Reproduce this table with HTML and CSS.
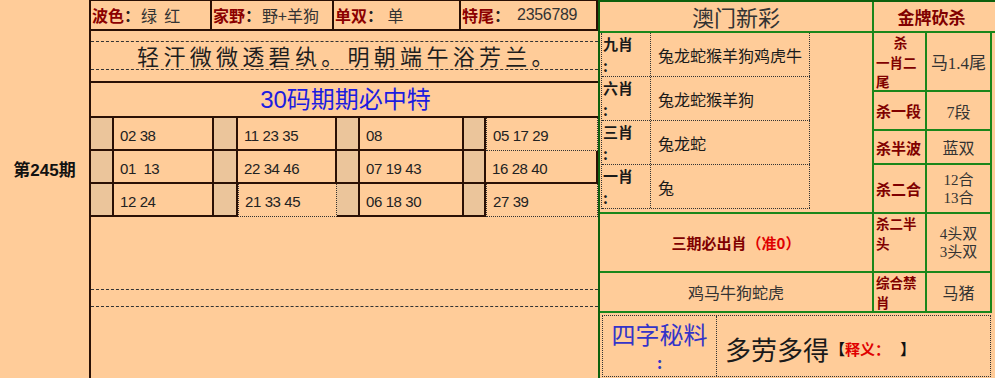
FILE: index.html
```html
<!DOCTYPE html>
<html lang="zh-CN">
<head>
<meta charset="utf-8">
<title>第245期</title>
<link rel="stylesheet" href="styles.css">
</head>
<body>
<div class="page">
  <div class="period">第245期</div>

  <div class="mid">
    <div class="info-row">
      <div class="info w1"><span class="lbl">波色</span><span class="colon">：</span>绿&nbsp; 红</div>
      <div class="info w2"><span class="lbl">家野</span><span class="colon">：</span>野+羊狗</div>
      <div class="info w3"><span class="lbl">单双</span><span class="colon">：</span>&nbsp;单</div>
      <div class="info w4"><span class="lbl">特尾</span><span class="colon">：</span><span class="digits">2356789</span></div>
    </div>
    <div class="poem-wrap">
      <div class="poem">轻汗微微透碧纨。明朝端午浴芳兰。</div>
    </div>
    <div class="title30">30码期期必中特</div>
    <div class="grid30">
      <div class="sh"></div><div class="nm">02 38</div><div class="sh"></div><div class="nm">11 23 35</div><div class="sh"></div><div class="nm">08</div><div class="sh"></div><div class="nm dot">05 17 29</div>
      <div class="sh"></div><div class="nm">01&nbsp; 13</div><div class="sh"></div><div class="nm">22 34 46</div><div class="sh"></div><div class="nm">07 19 43</div><div class="sh"></div><div class="nm">16 28 40</div>
      <div class="sh"></div><div class="nm">12 24</div><div class="sh"></div><div class="nm dot">21 33 45</div><div class="sh"></div><div class="nm">06 18 30</div><div class="sh"></div><div class="nm dot">27 39</div>
    </div>
    <div class="blank">
      <div class="band"></div>
    </div>
  </div>

  <div class="right">
    <div class="hd-main">澳门新彩</div>
    <div class="hd-kill">金牌砍杀</div>

    <div class="zodiac">
      <div class="ztable">
        <div class="zrow"><div class="zl">九肖<br>:</div><div class="zc">兔龙蛇猴羊狗鸡虎牛</div></div>
        <div class="zrow"><div class="zl">六肖<br>:</div><div class="zc">兔龙蛇猴羊狗</div></div>
        <div class="zrow"><div class="zl">三肖<br>:</div><div class="zc">兔龙蛇</div></div>
        <div class="zrow"><div class="zl">一肖<br>:</div><div class="zc">兔</div></div>
      </div>
    </div>

    <div class="kl multi r2"><div class="c">杀</div><div>一肖二</div><div>尾</div></div>
    <div class="kv r2 big">马1.4尾</div>
    <div class="kl r3 mid-l">杀一段</div>
    <div class="kv r3">7段</div>
    <div class="kl r4 mid-l">杀半波</div>
    <div class="kv r4">蓝双</div>
    <div class="kl r5 mid-l">杀二合</div>
    <div class="kv r5 two">12合<br>13合</div>
    <div class="kl multi r6">杀二半<br>头</div>
    <div class="kv r6 two">4头双<br>3头双</div>
    <div class="kl multi r7">综合禁<br>肖</div>
    <div class="kv r7">马猪</div>

    <div class="must r6"><span class="dr">三期必出肖</span><span class="rd">（准0）</span></div>
    <div class="animals r7">鸡马牛狗蛇虎</div>

    <div class="secret">
      <div class="sbox">
        <div class="sl">
          <div class="sl-title">四字秘料</div>
          <div class="sl-colon">:</div>
        </div>
        <div class="sc">多劳多得<span class="note">【<span class="rd">释义：</span>&nbsp;&nbsp; 】</span></div>
      </div>
    </div>
  </div>
</div>
</body>
</html>
```

FILE: styles.css
```css
body {
  margin: 0;
  background: #ffcc99;
  font-family: "Noto Sans CJK SC", sans-serif;
  color: #222;
}

.page {
  display: flex;
  width: 995px;
  height: 378px;
  overflow: hidden;
  background: #ffcc99;
}

/* left period column */
.period {
  width: 91px;
  flex: none;
  box-sizing: border-box;
  border-right: 2px solid #2a1005;
  display: flex;
  align-items: center;
  justify-content: center;
  padding-bottom: 42px;
  font: bold 17px "Liberation Sans", "Noto Sans CJK SC", sans-serif;
  color: #111;
}

/* middle section */
.mid {
  width: 507px;
  flex: none;
  display: flex;
  flex-direction: column;
}

.info-row {
  display: flex;
  height: 31px;
  box-sizing: border-box;
  border-top: 1px solid #2a1005;
  border-bottom: 2px solid #2a1005;
}

.info {
  box-sizing: border-box;
  border-right: 2px solid #2a1005;
  display: flex;
  align-items: center;
  font-size: 16px;
  white-space: nowrap;
  color: #333;
  padding-left: 1px;
}
.w1 { width: 121px; }
.w2 { width: 122px; }
.w3 { width: 127px; }
.w4 { width: 137px; }

.lbl {
  color: #8b0000;
  font-weight: bold;
}
.colon {
  color: #222;
  font-weight: bold;
  margin-right: 1px;
}
.digits {
  font-family: "Liberation Sans", sans-serif;
  font-size: 16px;
  letter-spacing: -0.3px;
  margin-left: 6px;
}

.poem-wrap {
  height: 52px;
  box-sizing: border-box;
  padding-top: 10px;
  border-bottom: 2px solid #2a1005;
}
.poem {
  height: 29px;
  box-sizing: border-box;
  border-top: 1px dashed #333;
  border-bottom: 1px dashed #333;
  text-align: center;
  font-size: 22px;
  line-height: 26px;
  letter-spacing: 4.3px;
  padding-left: 6px;
  color: #1e1e1e;
}

.title30 {
  height: 35px;
  box-sizing: border-box;
  border-bottom: 2px solid #2a1005;
  text-align: center;
  color: #1c1ce0;
  font-family: "Liberation Sans", "Noto Sans CJK SC", sans-serif;
  font-size: 24px;
  line-height: 33px;
  padding-left: 2px;
}

.grid30 {
  display: grid;
  grid-template-columns: 23px 100px 24px 99px 23px 104px 22px 112px;
  grid-auto-rows: 33px;
}
.grid30 > div {
  box-sizing: border-box;
  border-right: 2px solid #2a1005;
  border-bottom: 2px solid #2a1005;
}
.sh {
  background: #ebc59b;
}
.nm {
  display: flex;
  align-items: center;
  padding: 3px 0 0 6px;
  font-family: "Liberation Sans", sans-serif;
  font-size: 15px;
  letter-spacing: -0.4px;
  color: #222;
}
.grid30 > .dot {
  border-right: 1px dotted #333;
  border-bottom: 1px dotted #333;
  border-left: 1px dotted #333;
}

.blank {
  flex: 1;
  padding-top: 72px;
}
.band {
  height: 18px;
  box-sizing: border-box;
  border-top: 1px dashed #333;
  border-bottom: 1px dashed #333;
}

/* right section */
.right {
  width: 397px;
  flex: none;
  box-sizing: border-box;
  border-left: 2px solid #0d600d;
  border-top: 2px solid #0d600d;
  display: grid;
  grid-template-columns: 274px 53px 65px 3px;
  grid-template-rows: 31px 59px 39px 34px 49px 59px 40px 1fr;
}

.hd-main {
  grid-column: 1;
  grid-row: 1;
  border-right: 2px solid #1a861a;
  border-bottom: 2px solid #1a861a;
  display: flex;
  align-items: center;
  justify-content: center;
  font-size: 22px;
  color: #333;
  padding-bottom: 1px;
}
.hd-kill {
  grid-column: 2 / 5;
  grid-row: 1;
  border-bottom: 2px solid #1a861a;
  display: flex;
  align-items: center;
  justify-content: center;
  font-size: 17px;
  font-weight: bold;
  color: #800000;
  padding-right: 6px;
}

.zodiac {
  grid-column: 1;
  grid-row: 2 / 6;
  border-right: 2px solid #1a861a;
  border-bottom: 2px solid #1a861a;
  padding-left: 1px;
}
.ztable {
  width: 208px;
  border-left: 1px dotted #333;
}
.zrow {
  display: flex;
  height: 44px;
  box-sizing: border-box;
  border-bottom: 1px dotted #333;
}
.zl {
  width: 49px;
  box-sizing: border-box;
  border-right: 1px dotted #333;
  padding: 0 0 0 1px;
  font-size: 15px;
  font-weight: bold;
  line-height: 22px;
  color: #1a1a1a;
}
.zc {
  flex: 1;
  display: flex;
  align-items: center;
  padding-left: 7px;
  font-size: 16px;
  color: #1a1a1a;
  border-right: 1px dotted #333;
}

.kl {
  grid-column: 2;
  box-sizing: border-box;
  border-right: 2px solid #1a861a;
  border-bottom: 2px solid #1a861a;
  color: #800000;
  font-size: 15px;
  font-weight: bold;
  padding-left: 2px;
  white-space: nowrap;
}
.kl.multi {
  font-size: 13.5px;
  line-height: 19.6px;
}
.kl .c {
  text-align: center;
}
.kl.mid-l {
  display: flex;
  align-items: center;
}
.kv {
  grid-column: 3;
  box-sizing: border-box;
  border-right: 2px solid #1a861a;
  border-bottom: 2px solid #1a861a;
  display: flex;
  align-items: center;
  justify-content: center;
  text-align: center;
  font-family: "Liberation Serif", "Noto Sans CJK SC", serif;
  font-size: 16px;
  color: #333;
}
.kv.big {
  font-size: 17px;
}
.kv.two {
  line-height: 18px;
  font-size: 15px;
}

.r2 { grid-row: 2; }
.r3 { grid-row: 3; }
.r4 { grid-row: 4; }
.r5 { grid-row: 5; }
.r6 { grid-row: 6; }
.r7 { grid-row: 7; }

.must {
  grid-column: 1;
  border-right: 2px solid #1a861a;
  border-bottom: 2px solid #1a861a;
  display: flex;
  align-items: center;
  justify-content: center;
  font-size: 15px;
  font-weight: bold;
}
.dr { color: #800000; }
.rd { color: #e00000; }

.animals {
  grid-column: 1;
  border-right: 2px solid #1a861a;
  border-bottom: 2px solid #1a861a;
  display: flex;
  align-items: center;
  justify-content: center;
  font-size: 16px;
  color: #333;
}

.secret {
  grid-column: 1 / 5;
  grid-row: 8;
  padding: 2px 4px 1px 2px;
}
.sbox {
  display: flex;
  height: 100%;
  box-sizing: border-box;
  border: 1px dotted #333;
}
.sl {
  width: 114px;
  box-sizing: border-box;
  border-right: 1px dotted #333;
  text-align: center;
  color: #3434c8;
}
.sl-title {
  font-size: 24px;
  line-height: 35px;
}
.sl-colon {
  font-size: 16px;
  line-height: 23px;
  font-weight: bold;
}
.sc {
  display: flex;
  align-items: center;
  padding: 4px 0 0 8px;
  font-size: 26px;
  color: #1a1a1a;
}
.note {
  font-size: 15px;
  font-weight: bold;
  color: #111;
  margin-left: 1px;
}
```
